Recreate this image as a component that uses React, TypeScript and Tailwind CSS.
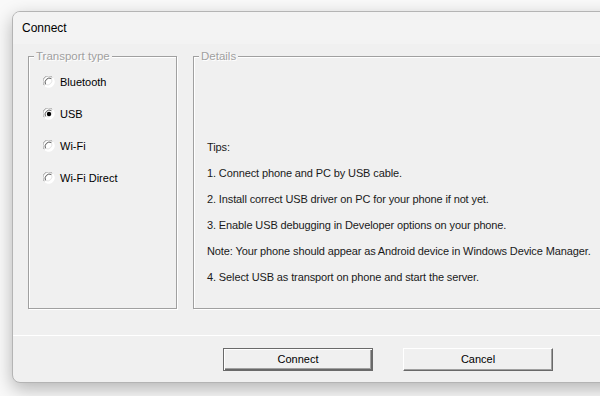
import { ReactNode } from 'react';

const font = { fontFamily: '"Liberation Sans", Arial, sans-serif' };

function Radio({ checked }: { checked?: boolean }) {
  return (
    <svg width="12" height="12" viewBox="0 0 12 12" className="shrink-0">
      <circle cx="6" cy="6" r="5.5" fill="#fff" />
      <path d="M1.5 9.5 A5.5 5.5 0 0 1 9.5 1.5" fill="none" stroke="#a0a0a0" strokeWidth="1" />
      <path d="M9.5 1.5 A5.5 5.5 0 0 1 1.5 9.5" fill="none" stroke="#ffffff" strokeWidth="1" />
      <path d="M2.5 8.5 A4.5 4.5 0 0 1 8.5 2.5" fill="none" stroke="#555" strokeWidth="1" />
      <path d="M8.5 2.5 A4.5 4.5 0 0 1 2.5 8.5" fill="none" stroke="#e3e3e3" strokeWidth="1" />
      {checked && <circle cx="6" cy="6" r="2.2" fill="#000" />}
    </svg>
  );
}

function Group({ title, className, children }: { title: string; className: string; children: ReactNode }) {
  return (
    <fieldset
      className={`h-[259px] border border-[#a0a0a0] shadow-[inset_1px_1px_0_#fff,1px_1px_0_#fff] ${className}`}
    >
      <legend className="ml-[5px] px-[2px] text-[11.5px] leading-[13px] text-[#a0a0a0] bg-[#f0f0f0] [text-shadow:1px_1px_0_#fff]">
        {title}
      </legend>
      {children}
    </fieldset>
  );
}

const transports = ['Bluetooth', 'USB', 'Wi-Fi', 'Wi-Fi Direct'];

const tips = [
  'Tips:',
  '1. Connect phone and PC by USB cable.',
  '2. Install correct USB driver on PC for your phone if not yet.',
  '3. Enable USB debugging in Developer options on your phone.',
  'Note: Your phone should appear as Android device in Windows Device Manager.',
  '4. Select USB as transport on phone and start the server.',
];

export default function App() {
  return (
    <div className="w-[600px] h-[396px] overflow-hidden bg-[#f9f9f9] pl-[12px] pt-[11px]" style={font}>
      <div className="w-[720px] h-[372px] rounded-tl-[8px] rounded-bl-[8px] border border-[#b4b4b4] bg-[#f0f0f0] shadow-[0_6px_18px_rgba(0,0,0,0.28)] overflow-hidden flex flex-col">
        {/* title bar */}
        <div className="h-[32px] bg-[#f3f3f3] flex items-center pl-[9px] text-[12px] text-black">Connect</div>

        <div className="flex pt-[6px] pl-[15px]">
          <Group title="Transport type" className="w-[149px]">
            <div className="pt-[3px] pl-[14px] flex flex-col">
              {transports.map((t) => (
                <div key={t} className="h-[32px] flex items-center gap-[5px] text-[11px] text-black">
                  <Radio checked={t === 'USB'} />
                  <span>{t}</span>
                </div>
              ))}
            </div>
          </Group>

          <Group title="Details" className="ml-[16px] w-[500px]">
            <div className="pt-[71px] pl-[13px] flex flex-col">
              {tips.map((t) => (
                <div key={t} className="h-[26px] flex items-center text-[11px] tracking-[-0.12px] text-[#1a1a1a] whitespace-nowrap">
                  {t}
                </div>
              ))}
            </div>
          </Group>
        </div>

        <div className="mt-[26px] border-t border-white" />

        <div className="flex pt-[12px] pl-[210px] gap-[30px]">
          <button className="w-[150px] h-[23px] bg-[#f0f0f0] border border-[#6a6a6a] shadow-[inset_1px_1px_0_#fff,inset_-1px_-1px_0_#696969,inset_-2px_-2px_0_#a0a0a0] text-[11px] text-black">
            Connect
          </button>
          <button className="w-[150px] h-[23px] bg-[#f0f0f0] border border-t-white border-l-white border-r-[#696969] border-b-[#696969] shadow-[inset_-1px_-1px_0_#a0a0a0] text-[11px] text-black">
            Cancel
          </button>
        </div>
      </div>
    </div>
  );
}
